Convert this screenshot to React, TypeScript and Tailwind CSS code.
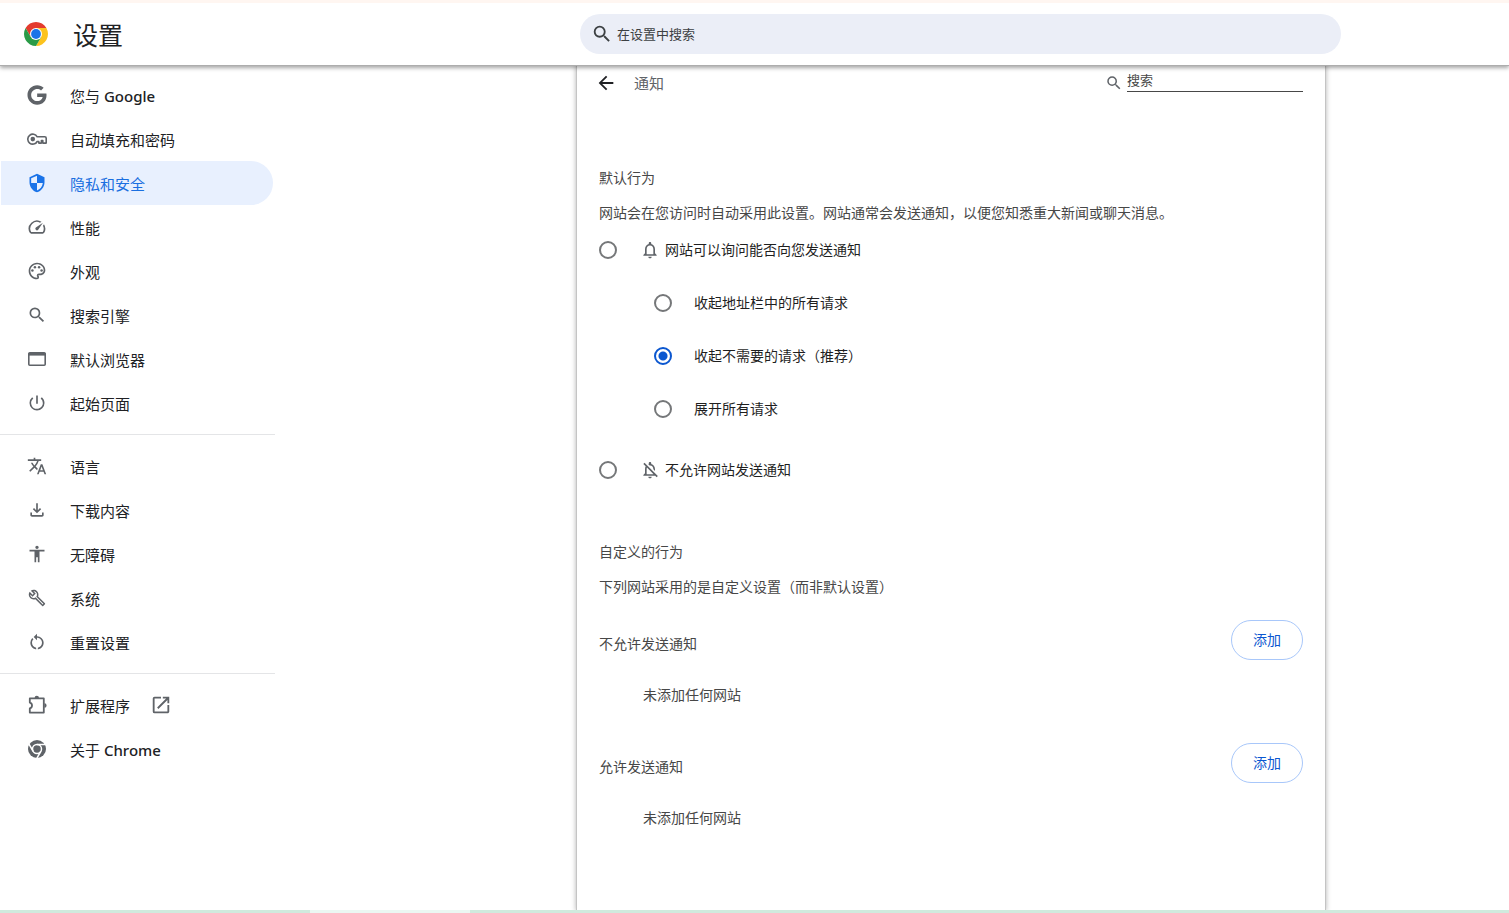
import { useState } from 'react'
import type { ComponentType, ReactNode } from 'react'
import { FaGoogle } from 'react-icons/fa'
import {
  MdAccessibility,
  MdArrowBack,
  MdNotificationsNone,
  MdOpenInNew,
  MdOutlineBuild,
  MdOutlineNotificationsOff,
  MdOutlinePalette,
  MdOutlineSpeed,
  MdPowerSettingsNew,
  MdRestartAlt,
  MdSearch,
  MdSecurity,
  MdTranslate,
} from 'react-icons/md'

type IconType = ComponentType<{ className?: string }>

type NavEntry = {
  label: ReactNode
  icon: IconType
  iconClass?: string
  active?: boolean
  external?: boolean
}

function KeyIcon({ className }: { className?: string }) {
  return (
    <svg viewBox="0 0 20 20" fill="none" className={className}>
      <path
        d="M10.2 7.8h7.6q1.4 0 1.4 1.4v4.9h-3.4v-2.6h-1.4v2.6h-2.6v-1.6h-1.6a5 5 0 1 1 0-4.7z"
        stroke="currentColor"
        strokeWidth="1.6"
        strokeLinejoin="round"
      />
      <circle cx="5.8" cy="10.1" r="2.3" fill="currentColor" />
    </svg>
  )
}

function WindowIcon({ className }: { className?: string }) {
  return (
    <svg viewBox="0 0 20 20" fill="none" className={className}>
      <rect x="1.8" y="3.8" width="16.4" height="12.4" rx="1" stroke="currentColor" strokeWidth="1.6" />
      <path d="M1.5 4h17v2.6h-17z" fill="currentColor" />
    </svg>
  )
}

function DownloadIcon({ className }: { className?: string }) {
  return (
    <svg viewBox="0 -960 960 960" fill="currentColor" className={className}>
      <path d="M480-320 280-520l56-58 104 104v-326h80v326l104-104 56 58-200 200ZM240-160q-33 0-56.5-23.5T160-240v-120h80v120h480v-120h80v120q0 33-23.5 56.5T720-160H240Z" />
    </svg>
  )
}

function PuzzleIcon({ className }: { className?: string }) {
  return (
    <svg viewBox="0 0 20 20" fill="none" className={className}>
      <path
        d="M2.8 3.4h14v14.2h-14v-4.2a3 3 0 0 0 0-5.8z"
        stroke="currentColor"
        strokeWidth="1.8"
        strokeLinejoin="round"
      />
      <path d="M7.6 3a2.2 2.2 0 0 1 4.4 0zM17.4 8.3a2.2 2.2 0 0 1 0 4.4z" fill="currentColor" />
    </svg>
  )
}

function ChromeMonoIcon({ className }: { className?: string }) {
  return (
    <svg viewBox="0 0 48 48" className={className}>
      <circle cx="24" cy="24" r="24" fill="currentColor" />
      <circle cx="24" cy="24" r="12" fill="none" stroke="#fff" strokeWidth="4" />
      <path d="M24 12h22M34.39 30 23.4 49M13.61 30 2.6 11" stroke="#fff" strokeWidth="4" />
    </svg>
  )
}

function ChromeLogo() {
  return (
    <svg viewBox="0 0 48 48" className="size-6 shrink-0" aria-hidden="true">
      <path d="M24 12h20.78A24 24 0 0 0 3.22 12l10.39 18z" fill="#e33b2e" />
      <path d="M34.39 30 24 48a24 24 0 0 0 20.78-36H24z" fill="#fcc31e" />
      <path d="M13.61 30 3.22 12A24 24 0 0 0 24 48l10.39-18z" fill="#2a9b47" />
      <circle cx="24" cy="24" r="12" fill="#fff" />
      <circle cx="24" cy="24" r="9.8" fill="#1a73e8" />
    </svg>
  )
}

const navGroups: NavEntry[][] = [
  [
    { label: <>您与 <span className="font-medium">Google</span></>, icon: FaGoogle },
    { label: '自动填充和密码', icon: KeyIcon },
    { label: '隐私和安全', icon: MdSecurity, active: true },
    { label: '性能', icon: MdOutlineSpeed },
    { label: '外观', icon: MdOutlinePalette },
    { label: '搜索引擎', icon: MdSearch },
    { label: '默认浏览器', icon: WindowIcon },
    { label: '起始页面', icon: MdPowerSettingsNew },
  ],
  [
    { label: '语言', icon: MdTranslate },
    { label: '下载内容', icon: DownloadIcon },
    { label: '无障碍', icon: MdAccessibility },
    { label: '系统', icon: MdOutlineBuild, iconClass: 'size-[18px]' },
    { label: '重置设置', icon: MdRestartAlt },
  ],
  [
    { label: '扩展程序', icon: PuzzleIcon, external: true },
    { label: <>关于 <span className="font-medium">Chrome</span></>, icon: ChromeMonoIcon, iconClass: 'size-[18px]' },
  ],
]

const requestOptions = [
  { value: 'collapse-all', label: '收起地址栏中的所有请求' },
  { value: 'collapse-unwanted', label: '收起不需要的请求（推荐）' },
  { value: 'expand-all', label: '展开所有请求' },
]

const siteLists = ['不允许发送通知', '允许发送通知']

const radioClass =
  'size-[18px] shrink-0 appearance-none rounded-full border-2 border-[#757779] bg-white checked:border-[#0b57d0] checked:bg-[radial-gradient(circle,#0b57d0_4px,#fff_5px)]'

function NavItem({ entry }: { entry: NavEntry }) {
  const Icon = entry.icon
  return (
    <li>
      <a
        href="#"
        aria-current={entry.active ? 'page' : undefined}
        className={`mr-0.5 ml-px flex h-11 items-center rounded-r-full pl-[26px] text-[15px] leading-5 ${
          entry.active ? 'bg-[#e8f0fe] text-[#1a6fe0]' : 'text-[#202124]'
        }`}
      >
        <span
          className={`flex size-5 items-center justify-center ${
            entry.active ? 'text-[#1a73e8]' : 'text-[#5f6368]'
          }`}
        >
          <Icon className={entry.iconClass ?? 'size-5'} />
        </span>
        <span className="ml-[23px] pt-px">{entry.label}</span>
        {entry.external && <MdOpenInNew className="ml-5 size-[22px] text-[#5f6368]" />}
      </a>
    </li>
  )
}

export default function App() {
  const [permission, setPermission] = useState('')
  const [request, setRequest] = useState('collapse-unwanted')

  return (
    <div className="flex min-h-screen flex-col bg-white font-['Noto_Sans','Noto_Sans_CJK_SC',sans-serif] text-sm leading-5 text-[#474747]">
      {/* Toolbar */}
      <header className="relative z-10 grid h-[65px] shrink-0 grid-cols-[580fr_minmax(0,761px)_168fr] items-center border-t-3 border-[#fff6f1] bg-white shadow-[0_1px_0_#adadad,0_3px_4px_rgba(0,0,0,0.35)]">
        <div className="flex items-center pl-6">
          <ChromeLogo />
          <h1 className="mt-0.5 ml-[25px] text-[25px] leading-8 text-[#202124]">设置</h1>
        </div>
        <label className="flex h-10 items-center rounded-full bg-[#ebeef7] pl-[11px] text-[#3c4043]">
          <MdSearch className="size-[22px]" />
          <input
            type="search"
            placeholder="在设置中搜索"
            aria-label="在设置中搜索"
            className="ml-1 min-w-0 flex-1 bg-transparent text-[13px] outline-none placeholder:text-[#3c4043]"
          />
        </label>
      </header>

      <div className="grid flex-1 grid-cols-[275px_302fr_minmax(0,748px)_184fr]">
        {/* Sidebar */}
        <nav className="pt-2">
          {navGroups.map((group, i) => (
            <ul key={i} className={i > 0 ? 'mt-[9px] border-t border-[#e4e5e7] pt-[9px]' : ''}>
              {group.map((entry, j) => (
                <NavItem key={j} entry={entry} />
              ))}
            </ul>
          ))}
        </nav>

        {/* Notifications page */}
        <main className="col-start-3 px-[22px] pb-16 shadow-[0_0_0_1px_#c4c4c4,0_0_5px_1px_rgba(0,0,0,0.3)]">
          <div className="flex h-[35px] items-center justify-between">
            <div className="flex items-center">
              <button type="button" aria-label="返回" className="-ml-1 text-[#202124]">
                <MdArrowBack className="size-[22px]" />
              </button>
              <h2 className="ml-[17px] text-[15px] text-[#5f6368]">通知</h2>
            </div>
            <label className="flex items-center">
              <MdSearch className="size-[18px] text-[#5f6368]" />
              <input
                type="search"
                placeholder="搜索"
                aria-label="搜索"
                className="mb-1 ml-1 h-[22px] w-44 border-b border-[#474747] bg-transparent text-[13px] outline-none placeholder:text-[#474747]"
              />
            </label>
          </div>

          <section className="mt-[68px]">
            <h3>默认行为</h3>
            <p className="mt-[15px]">网站会在您访问时自动采用此设置。网站通常会发送通知，以便您知悉重大新闻或聊天消息。</p>

            <label className="mt-[7px] flex h-10 items-center text-[#1f1f1f]">
              <input
                type="radio"
                name="permission"
                checked={permission === 'ask'}
                onChange={() => setPermission('ask')}
                className={radioClass}
              />
              <MdNotificationsNone className="ml-[23px] size-5 text-[#5f6368]" />
              <span className="ml-[5px]">网站可以询问能否向您发送通知</span>
            </label>

            <div className="mt-[6px] pl-[55px] text-[#1f1f1f]">
              {requestOptions.map((option) => (
                <label key={option.value} className="flex h-[53px] items-center">
                  <input
                    type="radio"
                    name="request"
                    checked={request === option.value}
                    onChange={() => setRequest(option.value)}
                    className={radioClass}
                  />
                  <span className="ml-[22px]">{option.label}</span>
                </label>
              ))}
            </div>

            <label className="mt-[15px] flex h-10 items-center text-[#1f1f1f]">
              <input
                type="radio"
                name="permission"
                checked={permission === 'block'}
                onChange={() => setPermission('block')}
                className={radioClass}
              />
              <MdOutlineNotificationsOff className="ml-[23px] size-5 text-[#5f6368]" />
              <span className="ml-[5px]">不允许网站发送通知</span>
            </label>
          </section>

          <section className="mt-[52px]">
            <h3>自定义的行为</h3>
            <p className="mt-[15px]">下列网站采用的是自定义设置（而非默认设置）</p>

            <div className="mt-[23px] flex flex-col gap-[38px]">
              {siteLists.map((title) => (
                <div key={title}>
                  <div className="flex h-10 items-center justify-between">
                    <h4 className="pt-2">{title}</h4>
                    <button
                      type="button"
                      className="h-10 rounded-full border border-[#a8c7fa] px-[21px] text-[#0b57d0]"
                    >
                      添加
                    </button>
                  </div>
                  <p className="mt-[25px] pl-11">未添加任何网站</p>
                </div>
              ))}
            </div>
          </section>
        </main>
      </div>

      <div className="relative z-10 flex h-[3px] shrink-0 bg-[#d0eadd]">
        <div className="ml-[310px] w-40 bg-[#ebf7f2]" />
      </div>
    </div>
  )
}
